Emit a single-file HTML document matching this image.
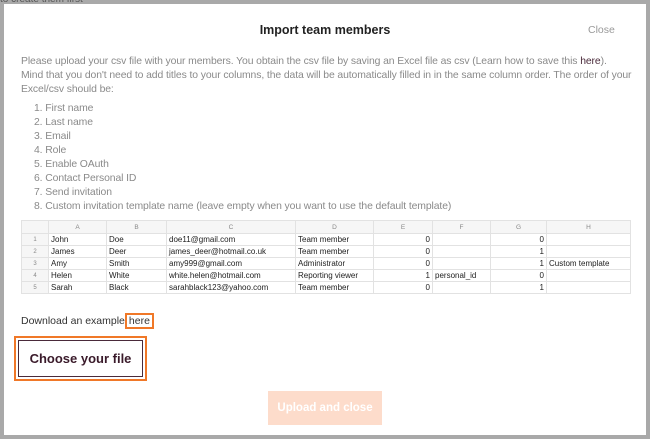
<!DOCTYPE html>
<html><head><style>
*{margin:0;padding:0;box-sizing:border-box}
body{width:650px;height:439px;background:#a9a9a9;position:relative;overflow:hidden;font-family:"Liberation Sans",sans-serif}
.top{position:absolute;left:0;top:-6px;font-size:10px;color:#555}
.modal{position:absolute;left:4px;top:4px;width:642px;height:431px;background:#fff}
.t{position:absolute;color:#8a8a8a;font-size:10.4px;white-space:nowrap;letter-spacing:-0.1px}
h1{position:absolute;left:0;width:642px;top:19px;text-align:center;font-size:12.5px;font-weight:bold;color:#222}
.close{position:absolute;left:584px;top:20px;font-size:10.5px;color:#999}
table{position:absolute;left:17px;top:216px;border-collapse:collapse;font-size:8px;color:#222;table-layout:fixed}
td{border:1px solid #e2e2e2;height:12px;padding:0 2px;white-space:nowrap;overflow:hidden}
tr.h td{background:#f6f6f6;color:#888;text-align:center;font-size:6.5px;height:13px}
td.n{background:#f6f6f6;color:#888;text-align:center;font-size:6px}
td.r{text-align:right}
.dl{position:absolute;left:17px;top:311px;font-size:10.5px;color:#333}
.dl span{border:2px solid #f07828;padding:0 2px}
.btn{position:absolute;left:10px;top:332px;width:133px;height:45px;border:2px solid #f07828;padding:2px}
.btn div{width:100%;height:100%;border:1px solid #4a2a3a;display:flex;align-items:center;justify-content:center;font-weight:bold;font-size:13px;color:#3a1a2a}
.up{position:absolute;left:264px;top:387px;width:114px;height:34px;background:#fddccb;color:#fff;font-weight:bold;font-size:11.5px;display:flex;align-items:center;justify-content:center}
</style></head><body>
<div class="top">to create them first</div>
<div class="modal">
<h1>Import team members</h1>
<div class="close">Close</div>
<div class="t" style="left:17px;top:52px">Please upload your csv file with your members. You obtain the csv file by saving an Excel file as csv (Learn how to save this <span style="color:#4a2a3a">here</span>).</div>
<div class="t" style="left:17px;top:66px">Mind that you don't need to add titles to your columns, the data will be automatically filled in in the same column order. The order of your</div>
<div class="t" style="left:17px;top:80px">Excel/csv should be:</div>
<div class="t" style="left:30px;top:99px">1. First name</div>
<div class="t" style="left:30px;top:113px">2. Last name</div>
<div class="t" style="left:30px;top:127px">3. Email</div>
<div class="t" style="left:30px;top:141px">4. Role</div>
<div class="t" style="left:30px;top:155px">5. Enable OAuth</div>
<div class="t" style="left:30px;top:169px">6. Contact Personal ID</div>
<div class="t" style="left:30px;top:183px">7. Send invitation</div>
<div class="t" style="left:30px;top:197px">8. Custom invitation template name (leave empty when you want to use the default template)</div>
<table>
<colgroup><col style="width:27px"><col style="width:58px"><col style="width:60px"><col style="width:129px"><col style="width:78px"><col style="width:59px"><col style="width:58px"><col style="width:56px"><col style="width:84px"></colgroup>
<tr class="h"><td></td><td>A</td><td>B</td><td>C</td><td>D</td><td>E</td><td>F</td><td>G</td><td>H</td></tr>
<tr><td class="n">1</td><td>John</td><td>Doe</td><td>doe11@gmail.com</td><td>Team member</td><td class="r">0</td><td></td><td class="r">0</td><td></td></tr>
<tr><td class="n">2</td><td>James</td><td>Deer</td><td>james_deer@hotmail.co.uk</td><td>Team member</td><td class="r">0</td><td></td><td class="r">1</td><td></td></tr>
<tr><td class="n">3</td><td>Amy</td><td>Smith</td><td>amy999@gmail.com</td><td>Administrator</td><td class="r">0</td><td></td><td class="r">1</td><td>Custom template</td></tr>
<tr><td class="n">4</td><td>Helen</td><td>White</td><td>white.helen@hotmail.com</td><td>Reporting viewer</td><td class="r">1</td><td>personal_id</td><td class="r">0</td><td></td></tr>
<tr><td class="n">5</td><td>Sarah</td><td>Black</td><td>sarahblack123@yahoo.com</td><td>Team member</td><td class="r">0</td><td></td><td class="r">1</td><td></td></tr>
</table>
<div class="dl">Download an example<span>here</span></div>
<div class="btn"><div>Choose your file</div></div>
<div class="up">Upload and close</div>
</div>
</body></html>
